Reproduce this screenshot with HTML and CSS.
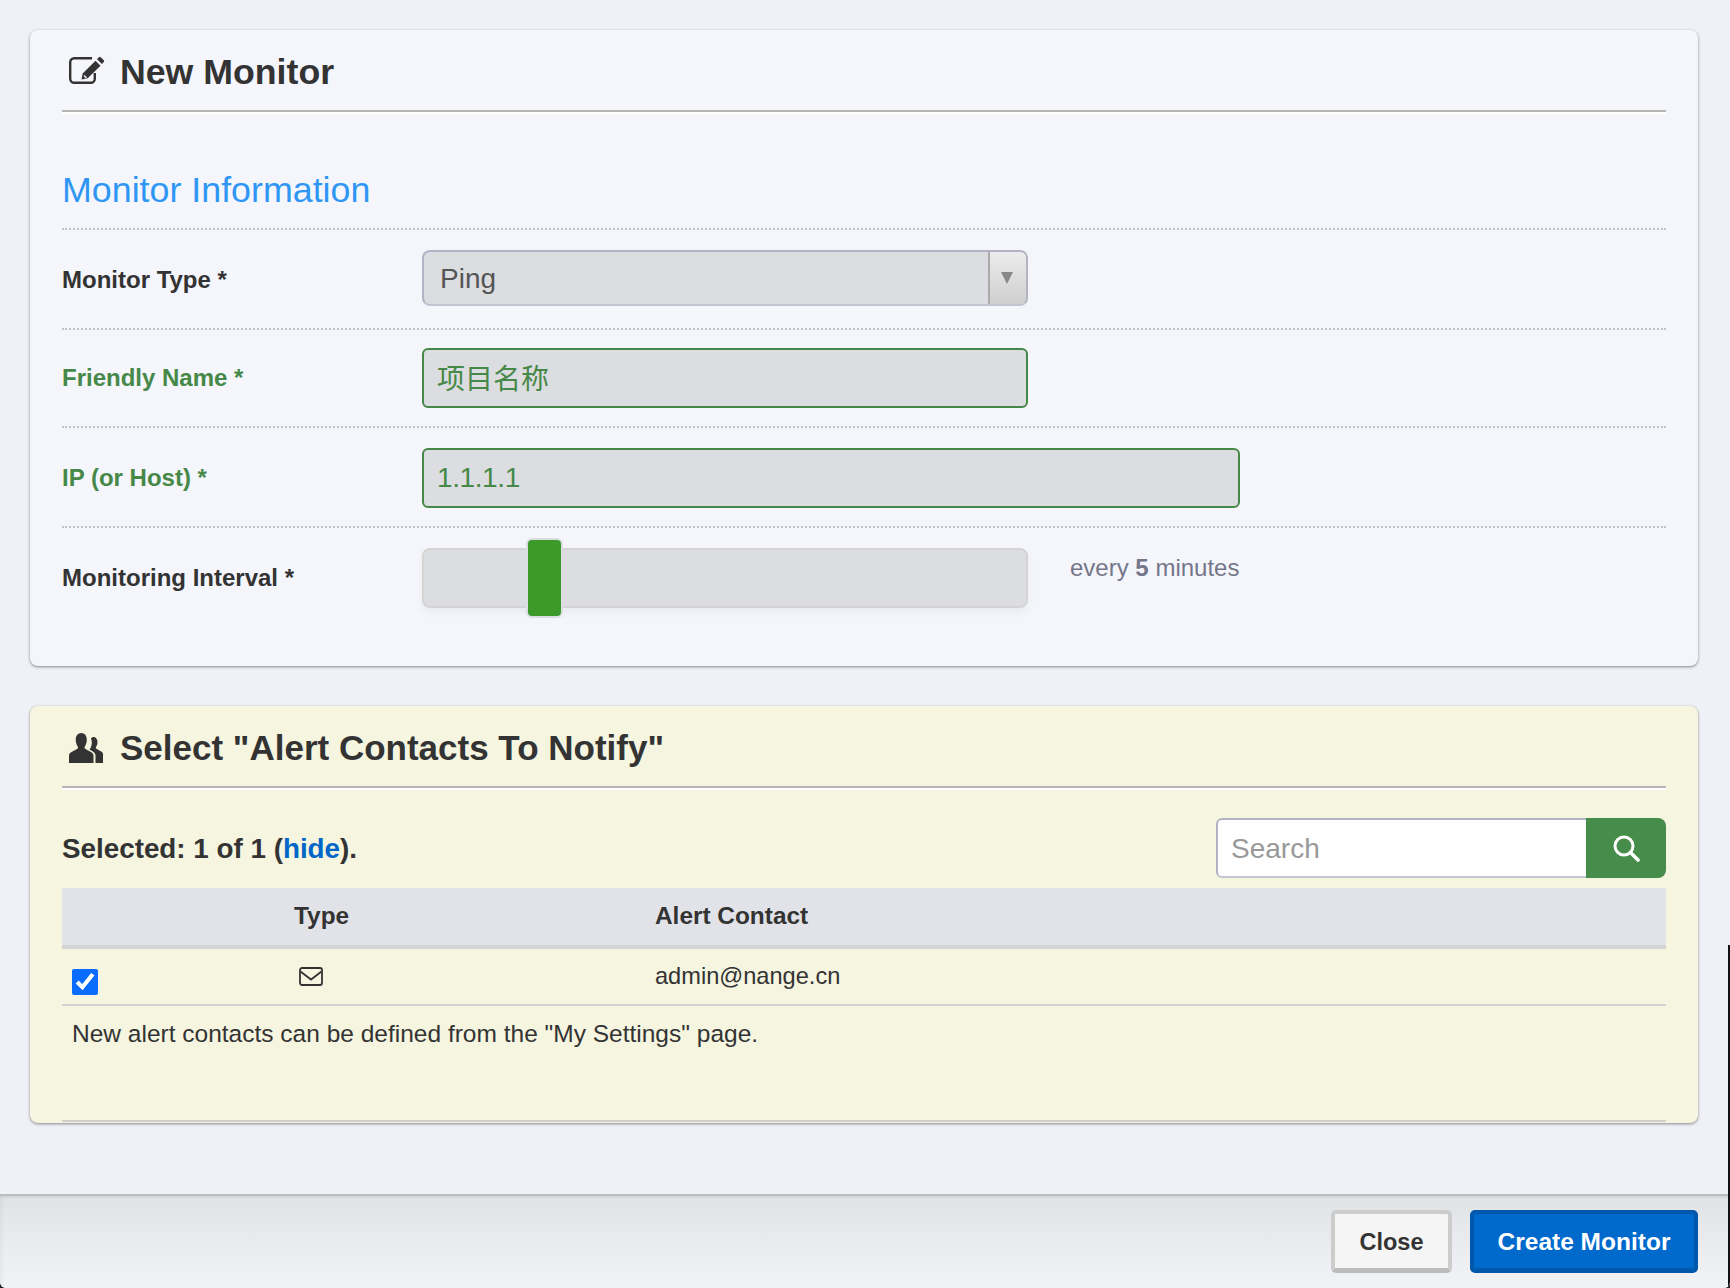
FILE: index.html
```html
<!DOCTYPE html>
<html lang="en">
<head>
    <meta charset="UTF-8">
    <meta name="viewport" content="width=device-width, initial-scale=1.0">
    <title>New Monitor</title>
    <link rel="stylesheet" href="styles.css">
</head>
<body>
    <div class="modal">
        <div class="modal-body">
            <section class="card">
                <h2 class="card-title card-title-main">
                    <svg class="title-icon" viewBox="0 0 36 32" aria-hidden="true">
                        <path d="M25.800 18v5.800a4 4 0 0 1-4 4H5.200a4 4 0 0 1-4-4V7.200a4 4 0 0 1 4-4H23" fill="none" stroke="#333" stroke-width="2.400"/>
                        <path d="M12.500 24.500l1.200-6L26.500 5.700l5 5L18.700 23.300z" fill="#333"/>
                        <path d="M28 4.200 30 2.200a1.200 1.200 0 0 1 1.700 0l3.100 3.100a1.200 1.200 0 0 1 0 1.700L33 9z" fill="#333"/>
                        <path d="M15 20.500l2.500 2.500" stroke="#f4f6fb" stroke-width="1.400"/>
                    </svg>
                    New Monitor
                </h2>
                <h3 class="section-title">Monitor Information</h3>

                <div class="form-row row-type">
                    <label class="form-label">Monitor Type *</label>
                    <div class="select-box">
                        <span class="select-value">Ping</span>
                        <span class="select-arrow"></span>
                    </div>
                </div>
                <div class="form-row row-name is-valid">
                    <label class="form-label" for="friendlyName">Friendly Name *</label>
                    <input class="text-input" id="friendlyName" type="text" value="项目名称">
                </div>
                <div class="form-row row-host is-valid">
                    <label class="form-label" for="ipHost">IP (or Host) *</label>
                    <input class="text-input text-input-wide" id="ipHost" type="text" value="1.1.1.1">
                </div>
                <div class="form-row row-interval">
                    <label class="form-label">Monitoring Interval *</label>
                    <div class="slider"><span class="slider-thumb"></span></div>
                    <span class="slider-note">every <b>5</b> minutes</span>
                </div>
            </section>

            <section class="card card-contacts">
                <h2 class="card-title">
                    <svg class="title-icon" viewBox="0 0 36 32" aria-hidden="true">
                        <path d="M12.300 0c3.200 0 5.500 2.800 5.500 6.500 0 3-1 5.400-2 7-.5.900-.2 2 .6 2.400l6 3.300c1.400.8 2.100 1.800 2.100 3.300V30H0v-7.500c0-1.500.7-2.500 2.100-3.300l6-3.300c.8-.4 1.100-1.500.6-2.400-1-1.600-2-4-2-7C6.700 2.800 9.100 0 12.300 0z" fill="#333"/>
                        <path d="M24.500 4c2.300 0 4 2.100 4 5 0 2.200-.7 3.900-1.500 5-.4.600-.2 1.400.4 1.700l4.800 2.700c1.200.7 1.800 1.500 1.800 2.800V30h-7.500v-7c0-2.300-1-3.600-3-4.800l-3-1.700.7-1c1-1.500 1.600-3.600 1.600-6 0-1.600-.3-3-.9-4C22.700 4.600 23.600 4 24.500 4z" fill="#333"/>
                    </svg>
                    Select "Alert Contacts To Notify"
                </h2>

                <div class="contacts-bar">
                    <div class="selected-count">Selected: 1 of 1 (<a class="link" href="#">hide</a>).</div>
                    <div class="search-box">
                        <input class="search-input" type="text" placeholder="Search">
                        <button class="search-btn" type="button" aria-label="Search">
                            <svg viewBox="0 0 28 28" width="28" height="28" aria-hidden="true">
                                <circle cx="12" cy="12" r="9" fill="none" stroke="#fff" stroke-width="3"/>
                                <path d="M18.500 18.500 26 26" stroke="#fff" stroke-width="3.600" stroke-linecap="round"/>
                            </svg>
                        </button>
                    </div>
                </div>

                <table class="contacts-table">
                    <thead>
                        <tr>
                            <th class="col-check"></th>
                            <th class="col-type">Type</th>
                            <th>Alert Contact</th>
                        </tr>
                    </thead>
                    <tbody>
                        <tr>
                            <td class="col-check"><input class="contact-check" type="checkbox" checked></td>
                            <td class="col-type">
                                <svg class="mail-icon" viewBox="0 0 24 19" aria-hidden="true">
                                    <rect x="1" y="1" width="22" height="17" rx="2" fill="none" stroke="#333" stroke-width="1.800"/>
                                    <path d="M1.500 4.500 12 12.500l10.500-8" fill="none" stroke="#333" stroke-width="1.800"/>
                                </svg>
                            </td>
                            <td>admin@nange.cn</td>
                        </tr>
                    </tbody>
                </table>
                <p class="contacts-note">New alert contacts can be defined from the "My Settings" page.</p>
            </section>
        </div>

        <div class="modal-footer">
            <button class="btn btn-close" type="button">Close</button>
            <button class="btn btn-create" type="button">Create Monitor</button>
        </div>
    </div>
</body>
</html>
```

FILE: styles.css
```css
* {
    box-sizing: border-box;
    margin: 0;
    padding: 0;
    font-family: "Liberation Sans", "Noto Sans CJK SC", Arial, sans-serif;
}
html, body {
    height: 100%;
}
body {
    background-color: #222;
    overflow: hidden;
    color: #333;
}
.modal {
    position: relative;
    display: flex;
    flex-direction: column;
    height: 1288px;
    background-color: #f0f1f7;
    border-radius: 0 0 6px 6px;
    overflow: hidden;
}
/* dark window edge showing down the lower right side */
.modal::after {
    content: "";
    position: absolute;
    top: 945px;
    right: 0;
    bottom: 0;
    width: 2px;
    background-color: #111;
}
.modal-body {
    flex: 1;
    padding: 30px 32px 0 30px;
}
.card {
    height: 636px;
    padding: 0 32px;
    background-color: #f4f6fb;
    border-radius: 8px;
    box-shadow: 0 1px 3px rgba(0, 0, 0, 0.45);
}
.card-title {
    display: flex;
    align-items: center;
    gap: 15px;
    height: 82px;
    padding: 3px 0 0 7px;
    font-size: 35px;
    font-weight: bold;
    color: #333;
    border-bottom: 2px solid #b5b5b5;
    box-shadow: 0 2px 0 #fff;
}
.card-title-main {
    padding-top: 5px;
    font-size: 35.700px;
}
.title-icon {
    width: 36px;
    height: 32px;
    margin-top: 2px;
    flex: none;
}
.card-title-main .title-icon {
    margin-top: -3px;
}
.section-title {
    height: 118px;
    padding-top: 58px;
    font-size: 35.800px;
    line-height: 40px;
    font-weight: normal;
    color: #2f96f5;
    border-bottom: 2px dotted #c4c4c4;
}
.form-row {
    display: flex;
    align-items: center;
    border-bottom: 2px dotted #c4c4c4;
}
.row-type {
    height: 100px;
    padding-bottom: 2px;
}
.row-type .form-label {
    margin-top: 4px;
}
.row-name {
    height: 98px;
}
.row-host {
    height: 100px;
    padding-top: 2px;
}
.row-interval {
    height: 110px;
    border-bottom: none;
    padding-bottom: 11px;
}
.form-label {
    width: 360px;
    flex: none;
    font-size: 24px;
    font-weight: bold;
    color: #333;
}
.is-valid .form-label {
    color: #468847;
}
.select-box {
    display: flex;
    align-items: stretch;
    width: 606px;
    height: 56px;
    background-color: #dcdde1;
    border: 2px solid #b3b3c4;
    border-bottom-color: #c4c4d2;
    border-radius: 8px;
    overflow: hidden;
}
.select-value {
    flex: 1;
    padding-left: 16px;
    font-size: 28px;
    line-height: 54px;
    color: #555;
}
.select-arrow {
    position: relative;
    width: 38px;
    border-left: 2px solid #aaa;
    background: linear-gradient(#ececec, #cfcfcf);
}
.select-arrow::after {
    content: "";
    position: absolute;
    left: 11px;
    top: 20px;
    border-left: 6px solid transparent;
    border-right: 6px solid transparent;
    border-top: 12px solid #888;
}
.text-input {
    width: 606px;
    height: 60px;
    padding: 0 13px 2px;
    font-size: 28px;
    color: #468847;
    background-color: #dcdde1;
    border: 2px solid #468847;
    border-radius: 6px;
    outline: none;
}
.text-input-wide {
    width: 818px;
    padding-bottom: 0;
    letter-spacing: -0.4px;
}
.slider {
    position: relative;
    width: 606px;
    height: 60px;
    background-color: #dcdde1;
    border: 2px solid #d4d4d4;
    border-radius: 8px;
    box-shadow: 0 4px 8px rgba(0, 0, 0, 0.05);
}
.slider-thumb {
    position: absolute;
    left: 102px;
    top: -12px;
    width: 37px;
    height: 80px;
    background-color: #3c9a2a;
    border: 2px solid #dcdde1;
    border-radius: 6px;
}
.slider-note {
    margin-left: 42px;
    margin-bottom: 20px;
    font-size: 24px;
    color: #75768a;
}
.card-contacts {
    display: flex;
    flex-direction: column;
    height: 417px;
    margin-top: 40px;
    background-color: #f5f5e0;
}
.contacts-bar {
    display: flex;
    justify-content: space-between;
    align-items: center;
    height: 60px;
    margin-top: 30px;
}
.selected-count {
    padding-top: 2px;
    font-size: 27.800px;
    font-weight: bold;
    color: #333;
}
.link {
    color: #0066c8;
    text-decoration: none;
}
.search-box {
    display: flex;
    width: 450px;
    height: 60px;
}
.search-input {
    flex: 1;
    min-width: 0;
    padding: 2px 13px 0;
    font-size: 28px;
    background-color: #fff;
    border: 2px solid #b3b3c4;
    border-bottom-color: #c4c4d2;
    border-right: none;
    border-radius: 6px 0 0 6px;
    outline: none;
}
.search-input::placeholder {
    color: #999;
}
.search-btn {
    display: flex;
    align-items: center;
    justify-content: center;
    width: 80px;
    background-color: #468d4b;
    border: none;
    border-radius: 0 8px 8px 0;
}
.contacts-table {
    width: 100%;
    margin-top: 10px;
    border-collapse: collapse;
    table-layout: fixed;
    font-size: 23.600px;
}
.contacts-table th {
    height: 59px;
    padding-bottom: 2px;
    text-align: left;
    font-size: 24.400px;
    font-weight: bold;
    background-color: #e2e3e8;
    border-bottom: 4px solid #d4d4d4;
}
.contacts-table td {
    height: 58px;
    border-bottom: 2px solid #d4d4d4;
}
.col-check {
    width: 232px;
    padding-left: 10px;
}
.col-type {
    width: 361px;
}
.contact-check {
    display: block;
    width: 26px;
    height: 26px;
    margin-top: 10px;
    accent-color: #0a6cff;
}
.mail-icon {
    display: block;
    width: 24px;
    height: 19px;
    margin-left: 5px;
}
.contacts-note {
    flex: 1;
    margin-bottom: 1px;
    padding: 13px 0 0 10px;
    font-size: 24.500px;
    line-height: 30px;
    border-bottom: 2px solid #d0d0c8;
}
.modal-footer {
    display: flex;
    justify-content: flex-end;
    gap: 18px;
    height: 94px;
    padding: 14px 32px 0 0;
    background: linear-gradient(#e0e3e5, #f2f3f7);
    border-top: 2px solid #bcbec4;
    box-shadow: inset 0 3px 3px -2px rgba(0, 0, 0, 0.1), inset 5px 0 5px -4px rgba(0, 0, 0, 0.06);
}
.btn {
    height: 63px;
    padding-top: 2px;
    font-size: 24.500px;
    font-weight: bold;
    border-radius: 5px;
    border-style: solid;
    border-width: 4px 4px 5px;
    cursor: pointer;
}
.btn-close {
    width: 121px;
    font-size: 23.500px;
    color: #333;
    background-color: #f5f5f5;
    border-color: #ccc #ccc #bbb;
}
.btn-create {
    width: 228px;
    color: #fff;
    background-color: #0069cc;
    border-color: #0058ac;
}
```
